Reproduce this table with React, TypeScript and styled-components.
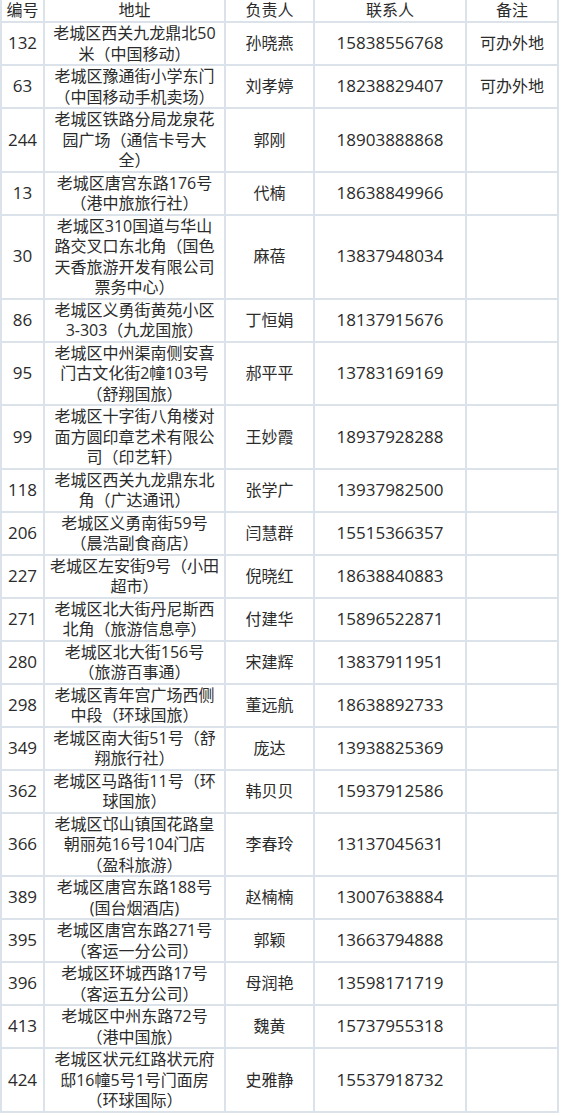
import React from 'react';
import styled, { createGlobalStyle } from 'styled-components';

const GlobalStyle = createGlobalStyle`
  html, body {
    margin: 0;
    padding: 0;
    background: #ffffff;
  }
`;

type Row = {
  id: string;
  addr: string[];
  name: string;
  phone: string;
  note?: string;
};

const rows: Row[] = [
  { id: '132', addr: ['老城区西关九龙鼎北50', '米（中国移动）'], name: '孙晓燕', phone: '15838556768', note: '可办外地' },
  { id: '63', addr: ['老城区豫通街小学东门', '（中国移动手机卖场）'], name: '刘孝婷', phone: '18238829407', note: '可办外地' },
  { id: '244', addr: ['老城区铁路分局龙泉花', '园广场（通信卡号大', '全）'], name: '郭刚', phone: '18903888868' },
  { id: '13', addr: ['老城区唐宫东路176号', '（港中旅旅行社）'], name: '代楠', phone: '18638849966' },
  { id: '30', addr: ['老城区310国道与华山', '路交叉口东北角（国色', '天香旅游开发有限公司', '票务中心）'], name: '麻蓓', phone: '13837948034' },
  { id: '86', addr: ['老城区义勇街黄苑小区', '3-303（九龙国旅）'], name: '丁恒娟', phone: '18137915676' },
  { id: '95', addr: ['老城区中州渠南侧安喜', '门古文化街2幢103号', '（舒翔国旅）'], name: '郝平平', phone: '13783169169' },
  { id: '99', addr: ['老城区十字街八角楼对', '面方圆印章艺术有限公', '司（印艺轩）'], name: '王妙霞', phone: '18937928288' },
  { id: '118', addr: ['老城区西关九龙鼎东北', '角（广达通讯）'], name: '张学广', phone: '13937982500' },
  { id: '206', addr: ['老城区义勇南街59号', '（晨浩副食商店）'], name: '闫慧群', phone: '15515366357' },
  { id: '227', addr: ['老城区左安街9号（小田', '超市）'], name: '倪晓红', phone: '18638840883' },
  { id: '271', addr: ['老城区北大街丹尼斯西', '北角（旅游信息亭）'], name: '付建华', phone: '15896522871' },
  { id: '280', addr: ['老城区北大街156号', '（旅游百事通）'], name: '宋建辉', phone: '13837911951' },
  { id: '298', addr: ['老城区青年宫广场西侧', '中段（环球国旅）'], name: '董远航', phone: '18638892733' },
  { id: '349', addr: ['老城区南大街51号（舒', '翔旅行社）'], name: '庞达', phone: '13938825369' },
  { id: '362', addr: ['老城区马路街11号（环', '球国旅）'], name: '韩贝贝', phone: '15937912586' },
  { id: '366', addr: ['老城区邙山镇国花路皇', '朝丽苑16号104门店', '（盈科旅游）'], name: '李春玲', phone: '13137045631' },
  { id: '389', addr: ['老城区唐宫东路188号', '(国台烟酒店)'], name: '赵楠楠', phone: '13007638884' },
  { id: '395', addr: ['老城区唐宫东路271号', '（客运一分公司）'], name: '郭颖', phone: '13663794888' },
  { id: '396', addr: ['老城区环城西路17号', '（客运五分公司）'], name: '母润艳', phone: '13598171719' },
  { id: '413', addr: ['老城区中州东路72号', '（港中国旅）'], name: '魏黄', phone: '15737955318' },
  { id: '424', addr: ['老城区状元红路状元府', '邸16幢5号1号门面房', '（环球国际）'], name: '史雅静', phone: '15537918732' },
];

const Table = styled.table`
  border-collapse: collapse;
  table-layout: fixed;
  width: 557px;
  font-family: "Open Sans", "Noto Sans CJK SC", sans-serif;
  font-size: 16px;
  color: #2b2b2b;
  text-spacing-trim: space-all;
  font-kerning: none;
`;

const HeadCell = styled.th`
  border: 2px solid #dbe2ea;
  border-top: none;
  height: 21px;
  padding: 0;
  font-weight: normal;
  line-height: 20.5px;
  text-align: center;
  vertical-align: middle;
`;

const Cell = styled.td<{ $num?: boolean }>`
  border: 2px solid #dbe2ea;
  padding: 0;
  line-height: 20.5px;
  text-align: center;
  vertical-align: middle;
  font-size: ${(p) => (p.$num ? '17px' : '16px')};
  white-space: nowrap;
`;

const App: React.FC = () => {
  return (
    <>
      <GlobalStyle />
      <Table>
        <colgroup>
          <col style={{ width: 43 }} />
          <col style={{ width: 181 }} />
          <col style={{ width: 89 }} />
          <col style={{ width: 152 }} />
          <col style={{ width: 92 }} />
        </colgroup>
        <thead>
          <tr>
            <HeadCell>编号</HeadCell>
            <HeadCell>地址</HeadCell>
            <HeadCell>负责人</HeadCell>
            <HeadCell>联系人</HeadCell>
            <HeadCell>备注</HeadCell>
          </tr>
        </thead>
        <tbody>
          {rows.map((r) => (
            <tr key={r.id}>
              <Cell $num>{r.id}</Cell>
              <Cell>
                {r.addr.map((line, i) => (
                  <React.Fragment key={i}>
                    {i > 0 && <br />}
                    {line}
                  </React.Fragment>
                ))}
              </Cell>
              <Cell>{r.name}</Cell>
              <Cell $num>{r.phone}</Cell>
              <Cell>{r.note ?? ''}</Cell>
            </tr>
          ))}
        </tbody>
      </Table>
    </>
  );
};

export default App;
